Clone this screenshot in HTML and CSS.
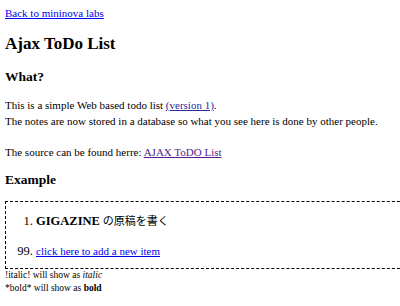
FILE: index.html
```html
<!DOCTYPE html>
<html lang="en">
<head>
  <meta charset="UTF-8">
  <title>Ajax ToDo List</title>
  <link rel="stylesheet" href="styles.css">
</head>
<body>

  <a href="#">Back to mininova labs</a>

  <h1>Ajax ToDo List</h1>

  <h3>What?</h3>
  <p class="intro">
    This is a simple Web based todo list <a href="#" class="version">(version 1)</a>.<br>
    The notes are now stored in a database so what you see here is done by other people.
  </p>
  <p>The source can be found herre: <a href="#" class="visited">AJAX ToDO List</a></p>

  <h3>Example</h3>

  <div class="todo-box">
    <ol class="todo-list">
      <li><b>GIGAZINE</b> の原稿を書く</li>
      <li value="99"><a href="#">click here to add a new item</a></li>
    </ol>
  </div>

  <div class="help">
    !italic! will show as <i>italic</i><br>
    *bold* will show as <b>bold</b>
  </div>

</body>
</html>
```

FILE: styles.css
```css
body {
  font-family: "Liberation Serif", "Noto Sans CJK JP", serif;
  font-size: 11px;
  line-height: 16px;
  margin: 5px 0 0 5px;
  color: #000;
  background: #fff;
  overflow: hidden;
}

a {
  color: #0000ee;
}

a.version {
  color: #2b2b9a;
}

a.visited {
  color: #551a8b;
}

h1 {
  font-size: 17px;
  line-height: 20px;
  margin: 13px 0 15px;
}

h3 {
  font-size: 13.5px;
  margin: 12px 0;
}

p {
  margin: 12px 0;
}

.intro {
  margin-bottom: 15px;
}

.todo-box {
  border: 1px dashed #000;
  border-right: none;
  margin-top: 13px;
  margin-right: -20px;
  padding: 11px 0 9px;
}

.todo-list {
  margin: 0;
  padding-left: 30px;
  font-size: 11px;
}

.todo-list li::marker {
  font-size: 12.5px;
}

.todo-list li + li {
  margin-top: 14px;
}

.todo-list b {
  font-size: 12.5px;
}

.help {
  font-size: 9.5px;
  line-height: 13px;
}
```
